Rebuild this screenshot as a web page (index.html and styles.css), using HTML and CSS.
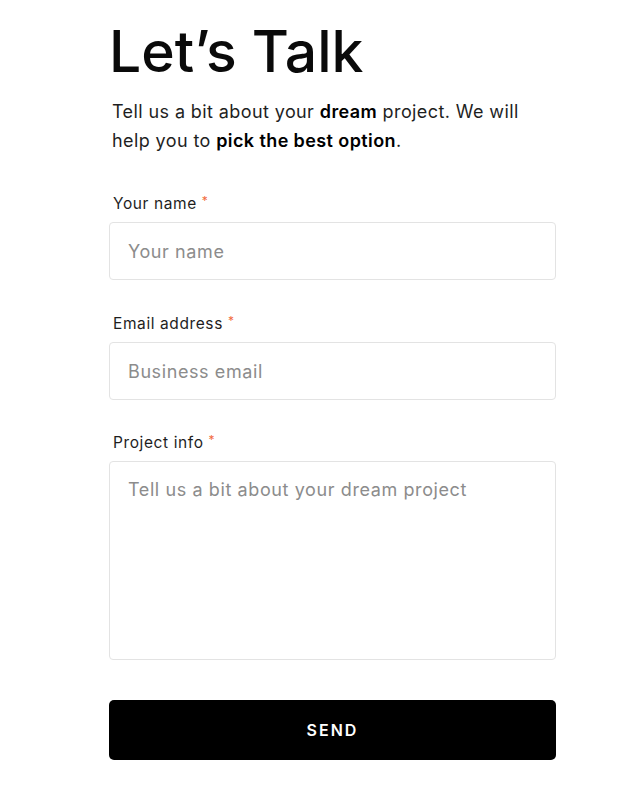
FILE: index.html
```html
<!DOCTYPE html>
<html lang="en">
<head>
<meta charset="utf-8">
<title>Let’s Talk</title>
<link rel="stylesheet" href="styles.css">
</head>
<body>
<main class="wrap">
  <h1 class="title">Let’s Talk</h1>
  <p class="intro">Tell us a bit about your <b>dream</b> project. We will help you to <b>pick the best option</b>.</p>
  <form class="form">
    <div class="field">
      <label class="label" for="name">Your name <span class="req">*</span></label>
      <input class="input" id="name" type="text" placeholder="Your name">
    </div>
    <div class="field">
      <label class="label" for="email">Email address <span class="req">*</span></label>
      <input class="input" id="email" type="email" placeholder="Business email">
    </div>
    <div class="field">
      <label class="label" for="info">Project info <span class="req">*</span></label>
      <textarea class="input area" id="info" placeholder="Tell us a bit about your dream project"></textarea>
    </div>
    <button class="send" type="button">SEND</button>
  </form>
</main>
</body>
</html>
```
FILE: styles.css
```css
* { box-sizing: border-box; }
html, body { margin: 0; background: #fff; }
body { font-family: Inter, "Noto Sans", sans-serif; color: #111; }
.wrap { width: 556px; padding-left: 109px; padding-top: 20px; }
.title { margin: 0 0 0 0; font-size: 57px; font-weight: 500; line-height: 64px; letter-spacing: 0; color: #0a0a0a; }
.intro { margin: 13px 0 0 3px; font-size: 18px; line-height: 29px; letter-spacing: 0.4px; color: #1f1f1f; width: 425px; }
.intro b { font-weight: 600; color: #000; }
.form { display: flex; flex-direction: column; margin-top: 36px; }
.field { display: flex; flex-direction: column; margin-bottom: 31px; }
.field:nth-child(2) { margin-bottom: 30px; }
.label { font-size: 15.5px; line-height: 20px; letter-spacing: 0.6px; margin: 0 0 8px 4px; color: #1e1e1e; }
.req { color: #f26a3d; font-size: 12px; vertical-align: 4px; }
.input { width: 447px; height: 58px; border: 1px solid #e3e3e3; border-radius: 4px; padding: 0 18px; font-family: inherit; font-size: 18px; letter-spacing: 0.6px; color: #222; background: #fff; outline: none; }
.input::placeholder { color: #8c8c8c; }
.area { height: 199px; padding: 16px 18px; resize: none; line-height: 24px; }
.send { width: 447px; height: 60px; margin-top: 9px; border: 0; border-radius: 5px; background: #000; color: #fff; font-family: inherit; font-size: 16px; font-weight: 600; letter-spacing: 2px; }
```
